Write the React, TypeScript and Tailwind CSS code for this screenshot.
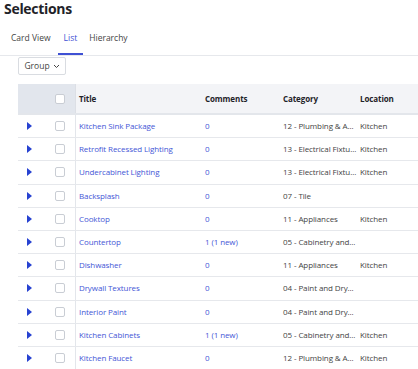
import React from 'react';

interface Selection {
  title: string;
  comments: string;
  category: string;
  location: string;
}

const rows: Selection[] = [
  { title: 'Kitchen Sink Package', comments: '0', category: '12 - Plumbing & A...', location: 'Kitchen' },
  { title: 'Retrofit Recessed Lighting', comments: '0', category: '13 - Electrical Fixtu...', location: 'Kitchen' },
  { title: 'Undercabinet Lighting', comments: '0', category: '13 - Electrical Fixtu...', location: 'Kitchen' },
  { title: 'Backsplash', comments: '0', category: '07 - Tile', location: '' },
  { title: 'Cooktop', comments: '0', category: '11 - Appliances', location: 'Kitchen' },
  { title: 'Countertop', comments: '1 (1 new)', category: '05 - Cabinetry and...', location: '' },
  { title: 'Dishwasher', comments: '0', category: '11 - Appliances', location: 'Kitchen' },
  { title: 'Drywall Textures', comments: '0', category: '04 - Paint and Dry...', location: '' },
  { title: 'Interior Paint', comments: '0', category: '04 - Paint and Dry...', location: '' },
  { title: 'Kitchen Cabinets', comments: '1 (1 new)', category: '05 - Cabinetry and...', location: 'Kitchen' },
  { title: 'Kitchen Faucet', comments: '0', category: '12 - Plumbing & A...', location: 'Kitchen' },
];

function Checkbox() {
  return <div className="w-[10px] h-[10px] rounded-[2px] border border-[#c9cdd4] bg-white" />;
}

export default function App() {
  return (
    <div className="w-[418px] h-[369px] overflow-hidden bg-white text-[#222]" style={{ fontFamily: '"Open Sans", "Noto Sans", sans-serif' }}>
      <h1 className="pl-[4px] text-[14px] leading-[18px] font-bold tracking-[-0.3px] text-[#1f2329]">Selections</h1>

      {/* tabs */}
      <div className="mt-[10px] flex border-b border-[#e6e8ec] text-[8.5px]">
        <div className="pl-[11px] pr-[7px] pt-[4px] pb-[11px] leading-[12px] text-[#444]">Card View</div>
        <div className="px-[6px] pt-[4px] pb-[9px] leading-[12px] text-[#3f51d4] border-b-2 border-[#3f51d4] font-medium">List</div>
        <div className="px-[6px] pt-[4px] pb-[11px] leading-[12px] text-[#444]">Hierarchy</div>
      </div>

      <div className="pl-[18px] pt-[1px]">
        <button className="h-[18px] w-[48px] flex items-center justify-center gap-[3px] border border-[#d9dce1] rounded-[2px] text-[8.5px] text-[#444] bg-white">
          Group
          <svg width="7" height="5" viewBox="0 0 7 5" fill="none">
            <path d="M1 1l2.5 2.5L6 1" stroke="#444" strokeWidth="1" />
          </svg>
        </button>
      </div>

      {/* table */}
      <div className="ml-[18px] mt-[9px] w-[420px] text-[8px] tracking-[-0.1px]">
        <div className="flex h-[31px] border-b-2 border-[#e3e6eb] font-bold text-[#1f2329]">
          <div className="w-[58px] shrink-0 bg-[#e2e6ed] flex items-center justify-end pr-[10px] border-r border-[#dcdfe5]">
            <Checkbox />
          </div>
          <div className="flex-1 bg-[#f3f4f7] flex items-center">
            <div className="w-[125px] pl-[3px]">Title</div>
            <div className="w-[78px] pl-[4px]">Comments</div>
            <div className="w-[77px] pl-[4px]">Category</div>
            <div className="pl-[4px]">Location</div>
          </div>
        </div>

        {rows.map((r, i) => (
          <div key={i} className="flex h-[23.2px] border-b border-[#e6e8ec]">
            <div className="w-[58px] shrink-0 flex items-center border-r border-[#e3e6eb]">
              <svg className="ml-[9px]" width="5" height="8" viewBox="0 0 5 8">
                <path d="M0 0L5 4L0 8Z" fill="#2742d1" />
              </svg>
              <div className="ml-auto mr-[10px]">
                <Checkbox />
              </div>
            </div>
            <div className="flex-1 flex items-center whitespace-nowrap">
              <div className="w-[125px] pl-[3px] text-[#4456d6]">{r.title}</div>
              <div className="w-[78px] pl-[4px] text-[#4456d6]">{r.comments}</div>
              <div className="w-[77px] pl-[4px] text-[#444]">{r.category}</div>
              <div className="pl-[4px] text-[#444]">{r.location}</div>
            </div>
          </div>
        ))}
      </div>
    </div>
  );
}
